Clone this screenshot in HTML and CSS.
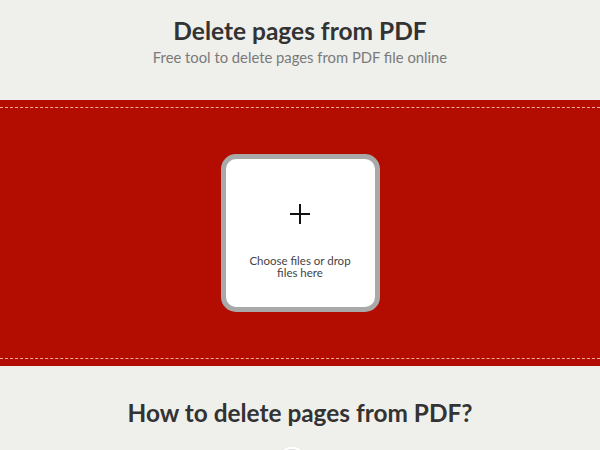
FILE: index.html
```html
<!DOCTYPE html>
<html lang="en">
<head>
  <meta charset="UTF-8">
  <meta name="viewport" content="width=device-width, initial-scale=1.0">
  <link rel="stylesheet" href="styles.css">
</head>
<body>

<div class="header">
  <h1>Delete pages from PDF</h1>
  <p class="sub">Free tool to delete pages from PDF file online</p>
</div>

<div class="upload-band">
  <div class="dash-area">
    <div class="drop-box">
      <svg class="plus" width="22" height="22" viewBox="0 0 22 22">
        <path d="M11 1v20M1 11h20" stroke="#111" stroke-width="2" fill="none"/>
      </svg>
      <div class="drop-text">Choose files or drop<br>files here</div>
    </div>
  </div>
</div>

<div class="howto">
  <h2>How to delete pages from PDF?</h2>
  <div class="step-dot"></div>
</div>

</body>
</html>
```

FILE: styles.css
```css
body {
  font-family: Lato, "Open Sans", sans-serif;
  margin: 0;
  background-color: #efefeb;
  color: #333;
  overflow: hidden;
}

.header {
  text-align: center;
  padding-top: 17px;
  height: 83px;
}

.header h1 {
  margin: 0;
  font-size: 24.5px;
  font-weight: 700;
  color: #333;
  line-height: 28px;
}

.sub {
  margin: 3px 0 0;
  font-size: 14.8px;
  color: #7a7a7a;
  line-height: 18px;
}

.upload-band {
  background-color: #b30c00;
  padding: 7px 0;
  height: 252px;
}

.dash-area {
  border-top: 1px dashed rgba(255, 200, 190, 0.85);
  border-bottom: 1px dashed rgba(255, 200, 190, 0.85);
  height: 250px;
  display: flex;
  align-items: center;
  justify-content: center;
}

.drop-box {
  width: 149px;
  height: 148px;
  background: #fff;
  border: 5px solid #a9a9a9;
  border-radius: 15px;
  display: flex;
  flex-direction: column;
  align-items: center;
}

.plus {
  margin-top: 44px;
}

.drop-text {
  margin-top: 30px;
  font-size: 11.5px;
  line-height: 12px;
  color: #444;
  text-align: center;
}

.howto {
  text-align: center;
  padding-top: 33px;
}

.howto h2 {
  margin: 0;
  font-size: 24.4px;
  font-weight: 700;
  color: #333;
  line-height: 28px;
}

.step-dot {
  width: 26px;
  height: 26px;
  margin: 20px 0 0 277px;
  border-radius: 50%;
  border: 2px solid #fff;
  background: #ddd;
}
```
